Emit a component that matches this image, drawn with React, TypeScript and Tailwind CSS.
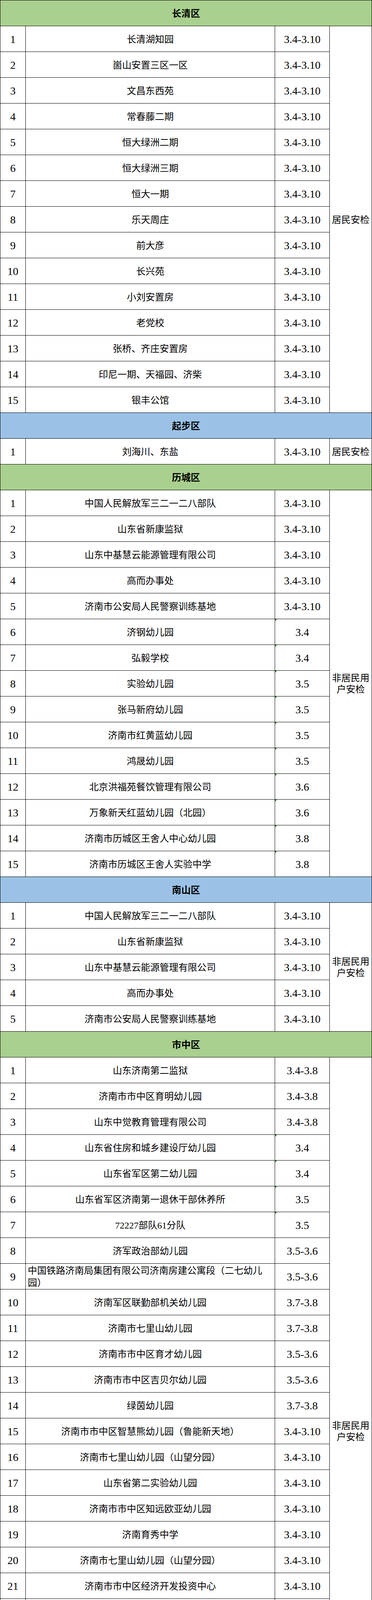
import React from "react"

type Row = {
  name: string
  date: string
  lines?: string[]
}

type Section = {
  title: string
  tone: "green" | "blue"
  note: string
  rows: Row[]
}

const wide = (date: string, names: string[]): Row[] => names.map((name) => ({ name, date }))

const chengDong = [
  "中国人民解放军三二一二八部队",
  "山东省新康监狱",
  "山东中基慧云能源管理有限公司",
  "高而办事处",
  "济南市公安局人民警察训练基地",
]

const sections: Section[] = [
  {
    title: "长清区",
    tone: "green",
    note: "居民安检",
    rows: wide("3.4-3.10", [
      "长清湖知园",
      "崮山安置三区一区",
      "文昌东西苑",
      "常春藤二期",
      "恒大绿洲二期",
      "恒大绿洲三期",
      "恒大一期",
      "乐天周庄",
      "前大彦",
      "长兴苑",
      "小刘安置房",
      "老党校",
      "张桥、齐庄安置房",
      "印尼一期、天福园、济柴",
      "银丰公馆",
    ]),
  },
  {
    title: "起步区",
    tone: "blue",
    note: "居民安检",
    rows: [{ name: "刘海川、东盐", date: "3.4-3.10" }],
  },
  {
    title: "历城区",
    tone: "green",
    note: "非居民用户安检",
    rows: [
      ...wide("3.4-3.10", chengDong),
      { name: "济钢幼儿园", date: "3.4" },
      { name: "弘毅学校", date: "3.4" },
      { name: "实验幼儿园", date: "3.5" },
      { name: "张马新府幼儿园", date: "3.5" },
      { name: "济南市红黄蓝幼儿园", date: "3.5" },
      { name: "鸿晟幼儿园", date: "3.5" },
      { name: "北京洪福苑餐饮管理有限公司", date: "3.6" },
      { name: "万象新天红蓝幼儿园（北园）", date: "3.6" },
      { name: "济南市历城区王舍人中心幼儿园", date: "3.8" },
      { name: "济南市历城区王舍人实验中学", date: "3.8" },
    ],
  },
  {
    title: "南山区",
    tone: "blue",
    note: "非居民用户安检",
    rows: wide("3.4-3.10", chengDong),
  },
  {
    title: "市中区",
    tone: "green",
    note: "非居民用户安检",
    rows: [
      { name: "山东济南第二监狱", date: "3.4-3.8" },
      { name: "济南市市中区育明幼儿园", date: "3.4-3.8" },
      { name: "山东中觉教育管理有限公司", date: "3.4-3.8" },
      { name: "山东省住房和城乡建设厅幼儿园", date: "3.4" },
      { name: "山东省军区第二幼儿园", date: "3.4" },
      { name: "山东省军区济南第一退休干部休养所", date: "3.5" },
      { name: "72227部队61分队", date: "3.5" },
      { name: "济军政治部幼儿园", date: "3.5-3.6" },
      {
        name: "中国铁路济南局集团有限公司济南房建公寓段（二七幼儿园）",
        date: "3.5-3.6",
        lines: ["中国铁路济南局集团有限公司济南房建公寓段（二七幼儿", "园）"],
      },
      { name: "济南军区联勤部机关幼儿园", date: "3.7-3.8" },
      { name: "济南市七里山幼儿园", date: "3.7-3.8" },
      { name: "济南市市中区育才幼儿园", date: "3.5-3.6" },
      { name: "济南市市中区吉贝尔幼儿园", date: "3.5-3.6" },
      { name: "绿茵幼儿园", date: "3.7-3.8" },
      ...wide("3.4-3.10", [
        "济南市市中区智慧熊幼儿园（鲁能新天地）",
        "济南市七里山幼儿园（山望分园）",
        "山东省第二实验幼儿园",
        "济南市市中区知远欧亚幼儿园",
        "济南育秀中学",
        "济南市七里山幼儿园（山望分园）",
        "济南市市中区经济开发投资中心",
        "山东中移通信技术工程有限公司食堂",
        "济南市国家安全局",
        "山东祥泰硕华置业有限公司",
        "济南市公安消防支队英雄山路中队",
        "济南京奇餐饮有限公司",
        "山东省问酒营销有限公司",
        "济南炎槿餐饮管理有限公司",
        "国能销售集团有限公司山东分公司",
      ]),
    ],
  },
  {
    title: "槐荫区",
    tone: "blue",
    note: "非居民用户安检",
    rows: [
      { name: "济南大学", date: "3.4-3.6" },
      { name: "槐荫区青少年宫第一幼儿园", date: "3.7-3.8" },
      { name: "省立医院保健楼", date: "3.4" },
      { name: "济南薛氏三八餐饮有限公司", date: "3.4" },
      { name: "一大食物有限公司", date: "3.6" },
      { name: "上海锦江国际旅馆投资有限公司经三路分公司", date: "3.7" },
    ],
  },
  {
    title: "长清区",
    tone: "green",
    note: "非居民用户安检",
    rows: [
      ...wide("3.4", [
        "长清体育局食堂",
        "济南市长清中学食堂",
        "济南市长清区老滋味酒店",
        "济南丁香餐饮管理合伙企业（兴茂超意兴）",
        "济南市长清区大学城实验初级中学（中骏雍景府幼儿园）",
      ]),
      ...wide("3.5", [
        "济南市长清区大风车双语幼儿园",
        "济南市长清区合众快餐",
        "常春藤狼诱惑",
        "常春藤黄焖鸡",
        "长清区金年任餐厅",
        "上马水饺",
      ]),
      ...wide("3.6", [
        "济南市长清区西北园兰州牛肉拉面店",
        "常春藤银座",
        "常春藤麻辣鱼饭庄",
        "常春藤小厨娘",
        "常春藤银粉世家",
      ]),
      ...wide("3.7", [
        "济南园博文旅产业发展有限公司",
        "济南市长清区源生小炉子（食匠坊）",
        "闵记辣子鸡店",
        "银座商城春江月烤鱼店（东方宫拉面）",
        "济南市长清区第二初级中学",
      ]),
      ...wide("3.8", [
        "济南幼儿师范高等专科学校常春藤附属幼儿园",
        "济南热电有限公司",
        "济南市长清区大学城实验初级中学",
      ]),
    ],
  },
  {
    title: "起步区",
    tone: "green",
    note: "非居民用户安检",
    rows: [{ name: "山东旺旺食品有限公司南表", date: "3.4-3.6" }],
  },
]

// merged "安检" cell spans the whole section
const spanClass: Record<number, string> = {
  1: "row-span-1",
  5: "row-span-5",
  6: "row-span-6",
  15: "row-span-15",
  24: "row-span-24",
  29: "row-span-29",
}

const cell = "flex items-center justify-center bg-white pt-[3px] text-center"

function SectionRows({ section }: { section: Section }) {
  const { title, tone, note, rows } = section

  return (
    <>
      <div
        className={
          "col-span-4 flex items-center justify-center pt-[2px] text-[24px] font-bold " +
          (tone === "green" ? "bg-[#a9d08e]" : "bg-[#9bc2e6]")
        }
      >
        {title}
      </div>

      {rows.map((row, i) => (
        <React.Fragment key={title + i}>
          <div className={cell + " text-[28px] leading-none"}>{i + 1}</div>

          {row.lines ? (
            <div className="flex flex-col justify-center bg-white pl-[5px] pt-[2px] text-[24px] leading-[31px]">
              {row.lines.map((l) => (
                <span key={l}>{l}</span>
              ))}
            </div>
          ) : (
            <div className={cell + " text-[24px] leading-[31px]"}>{row.name}</div>
          )}

          <div className={cell + " relative text-[28px] leading-none"}>
            {!row.date.includes("-") && (
              <span className="absolute left-0 top-0 h-0 w-0 border-r-[5px] border-t-[5px] border-r-transparent border-t-[#1d9a1d]" />
            )}
            {row.date}
          </div>

          {i === 0 && (
            <div className={cell + " " + spanClass[rows.length] + " px-[5px] text-[24px] leading-[29px]"}>
              {note}
            </div>
          )}
        </React.Fragment>
      ))}
    </>
  )
}

export default function App() {
  return (
    <div className="w-[952px] bg-white font-['Liberation_Serif','Noto_Sans_CJK_SC',serif] text-black">
      <div className="grid auto-rows-[65px] grid-cols-[64px_637px_139px_107px] gap-px bg-black p-px">
        {sections.map((s, i) => (
          <SectionRows key={i} section={s} />
        ))}
      </div>
    </div>
  )
}
